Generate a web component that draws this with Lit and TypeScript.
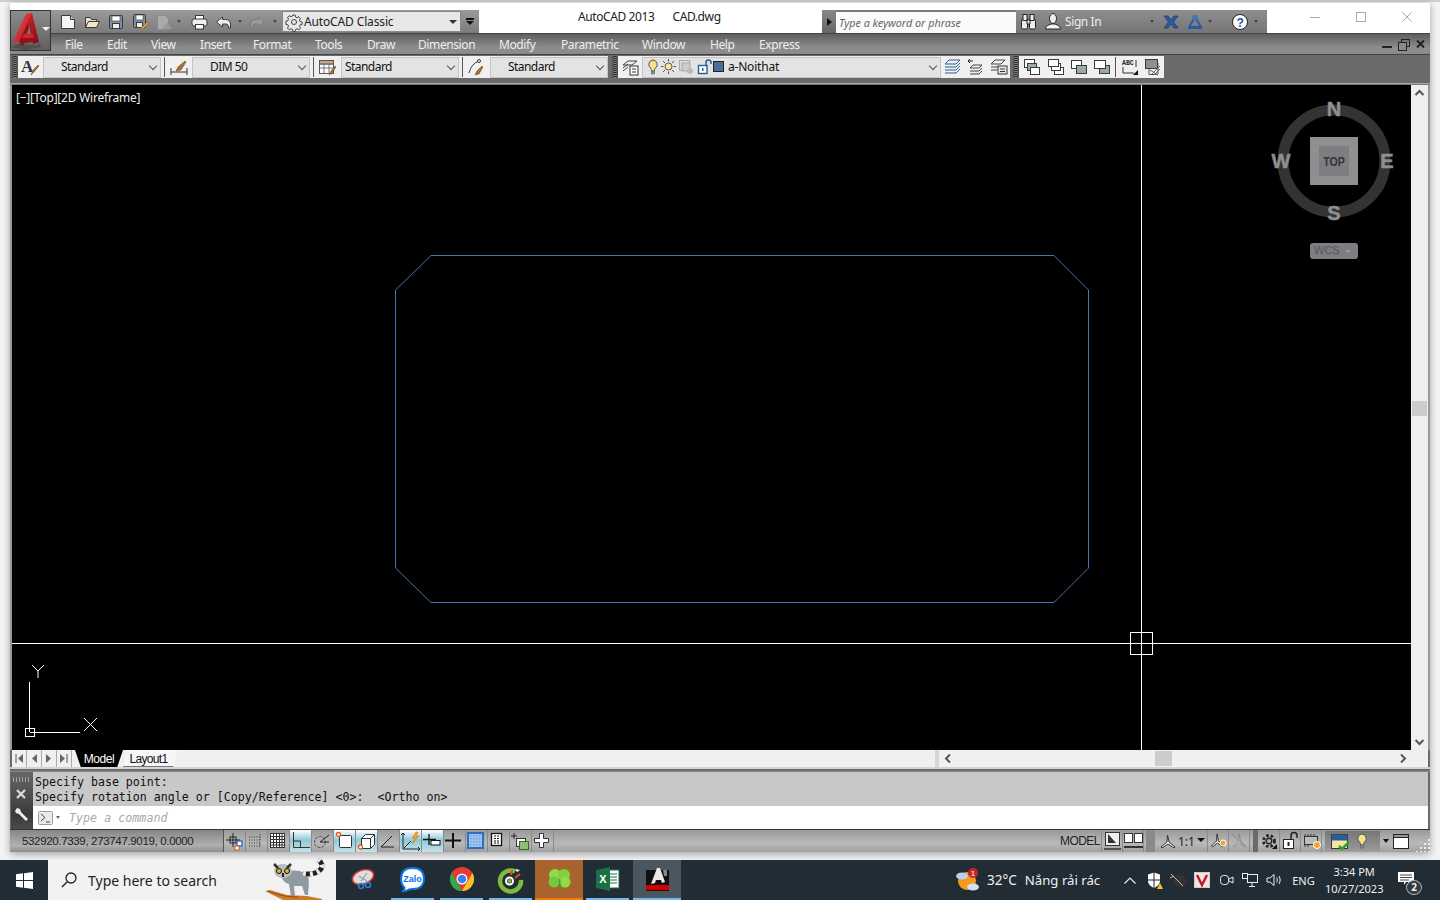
import { LitElement, html, css, svg } from "lit";
import { customElement } from "lit/decorators.js";

const ic = (w: number, h: number, c: unknown, vb?: string) =>
  html`<svg class="ic" width=${w} height=${h} viewBox=${vb ?? `0 0 ${w} ${h}`}>${c}</svg>`;

const S = "#3a3a3a";
const I: Record<string, unknown> = {
  newdoc: svg`<path d="M1.5 1.5h9l4 4v9h-13z" fill="#f4f4f4" stroke="${S}"/><path d="M10.5 1.5v4h4" fill="#ccc" stroke="${S}"/>`,
  open: svg`<path d="M1.5 13.5v-10h5l1 2h5v2" fill="#ddd" stroke="${S}"/><path d="M1.5 13.5l3-6h11l-3 6z" fill="#f0e6c4" stroke="${S}"/>`,
  save: svg`<rect x="1.5" y="1.5" width="13" height="13" rx="1" fill="#7c8ea8" stroke="${S}"/><rect x="4" y="2" width="8" height="5" fill="#fff" stroke="${S}" stroke-width=".6"/><rect x="4.5" y="9.5" width="7" height="5" fill="#eee" stroke="${S}"/>`,
  saveas: svg`<rect x="1.5" y="1.5" width="12" height="13" rx="1" fill="#7c8ea8" stroke="${S}"/><rect x="4" y="2" width="7" height="5" fill="#fff" stroke="${S}" stroke-width=".6"/><rect x="4.5" y="9.5" width="6" height="5" fill="#eee" stroke="${S}"/><path d="M9 15l6-6 1.5 1.5-6 6z" fill="#e8a030" stroke="#8a5a10" stroke-width=".6"/>`,
  preview: svg`<path d="M1.5 1.5h8l3 3v11h-11z" fill="#aaa" stroke="#8a8a8a"/><path d="M6 15l5-7 5 7z" fill="#999"/>`,
  print: svg`<rect x="4.5" y="1.5" width="8" height="4" fill="#fff" stroke="${S}"/><rect x="1" y="5" width="15" height="7" rx="2" fill="#eee" stroke="${S}"/><rect x="4.5" y="10.5" width="8" height="4.5" fill="#fff" stroke="${S}"/>`,
  undo: svg`<path d="M7.5 2L1.5 7l6 5V9h3c2 0 3 1 3 3v1h2V9c0-3-2-4.500-5-4.500H7.500z" fill="#eee" stroke="${S}" stroke-linejoin="round"/>`,
  redo: svg`<path d="M8.500 2l6 5-6 5V9h-3c-2 0-3 1-3 3v1h-2V9c0-3 2-4.500 5-4.500h3z" fill="#9a9a9a" stroke="#7c7c7c" stroke-linejoin="round"/>`,
  gear: svg`<g fill="none" stroke="#444"><circle cx="8" cy="8" r="2.500"/><path d="M6.800 1h2.400l.4 2 1.500.7 1.800-1 1.600 1.700-1 1.700.6 1.500 2 .5v2.300l-2 .5-.6 1.500 1 1.700-1.600 1.700-1.800-1-1.500.6-.4 2H6.800l-.4-2-1.500-.6-1.800 1-1.600-1.700 1-1.700-.6-1.500-2-.5V7.100l2-.5.600-1.500-1-1.700L3.100 1.700l1.800 1 1.500-.7z"/></g>`,
  textstyle: svg`<text x="0" y="14" font-family="Liberation Serif" font-weight="700" font-size="17" fill="#334">A</text><path d="M10 17l2-5 5-5 1 1-5 6z" fill="#a8702c" stroke="#634014" stroke-width=".5"/>`,
  dimstyle: svg`<path d="M1 10v7M17 10v7M1 14h16" stroke="#333" fill="none"/><path d="M6 13l2-4 7-6 1 1-5 8z" fill="#a8702c" stroke="#634014" stroke-width=".5"/>`,
  tablestyle: svg`<rect x=".5" y="1.500" width="14" height="13" fill="#fff" stroke="#555"/><path d="M.5 5h14M.5 9h14M5 5v9.500M10 5v9.500" stroke="#777"/><rect x=".5" y="1.500" width="14" height="3.500" fill="#c8a488" stroke="#555"/><path d="M10 16l2-4 4-5 1 1-4 6z" fill="#a8702c" stroke="#634014" stroke-width=".5"/>`,
  mlstyle: svg`<path d="M1 15c2-7 5-10 10-12" fill="none" stroke="#333"/><circle cx="11" cy="3" r="1.500" fill="#fff" stroke="#333"/><path d="M7 17l2-4 5-5 1 1-4 7z" fill="#a8702c" stroke="#634014" stroke-width=".5"/>`,
  layerprops: svg`<path d="M2 7l5-4h9l-5 4zM2 10l5-4M2 13l5-4" fill="none" stroke="#444"/><rect x="9" y="8" width="8" height="9" fill="#fff" stroke="#333"/><path d="M11 11h4M11 14h4" stroke="#333"/>`,
  bulb: svg`<path d="M6 1a4.500 4.500 0 0 0-2.500 8c1 1 1 2 1 3h3c0-1 0-2 1-3A4.500 4.500 0 0 0 6 1z" fill="#f7e28a" stroke="#555"/><rect x="4.500" y="12" width="3" height="3" fill="#7c8cab" stroke="#555" stroke-width=".5"/>`,
  sun: svg`<circle cx="7.500" cy="7.500" r="3.500" fill="#f4e8a0" stroke="#555"/><path d="M7.500 0v2.500M7.500 12.500V15M0 7.500h2.500M12.500 7.500H15M2 2l2 2M11 11l2 2M13 2l-2 2M4 11l-2 2" stroke="#555"/>`,
  freeze: svg`<rect x=".5" y=".5" width="10" height="10" fill="#ddd" stroke="#aaa"/><rect x="3" y="3" width="8" height="8" fill="#ccc" stroke="#aaa"/><circle cx="11" cy="11" r="3" fill="#bbb"/>`,
  lock: svg`<path d="M9 6V3.500a2.500 2.500 0 0 1 5 0V5" fill="none" stroke="#2a5e9a" stroke-width="1.500"/><rect x="1.500" y="6.500" width="8.500" height="8" fill="#fff" stroke="#2a5e9a" stroke-width="1.400"/><rect x="5" y="9" width="1.500" height="3" fill="#2a5e9a"/>`,
  layers1: svg`<path d="M1 6l4-4h11l-4 4zM1 9h11l4-4M1 12h11l4-4M1 15h11l4-4" fill="none" stroke="#2e5c92"/>`,
  layers2: svg`<path d="M3 10l3-3h9l-3 3zM3 13h9l3-3M3 16h9l3-3" fill="none" stroke="#444"/><path d="M1 3h5M1 3l2-2M1 3l2 2" stroke="#222" fill="none"/>`,
  layers3: svg`<path d="M1 6l4-4h10l-4 4zM1 9h7M1 12h6" fill="none" stroke="#444"/><rect x="8" y="8" width="9" height="8" fill="#e8e8e8" stroke="#333"/><path d="M10 11h5M10 13.500h5" stroke="#333"/>`,
  ord1: svg`<rect x="1.500" y="1.500" width="10" height="8" fill="#fff" stroke="${S}"/><rect x="4.500" y="5.500" width="9" height="7" fill="#9aa" stroke="${S}"/><rect x="7.500" y="9.500" width="9" height="7" fill="#fff" stroke="${S}"/>`,
  ord2: svg`<rect x="7.500" y="9.500" width="9" height="7" fill="#fff" stroke="${S}"/><rect x="4.500" y="5.500" width="9" height="7" fill="#fff" stroke="${S}"/><rect x="1.500" y="1.500" width="10" height="7" fill="#fff" stroke="${S}"/>`,
  ord3: svg`<rect x="1.500" y="2.500" width="10" height="8" fill="#fff" stroke="${S}"/><rect x="6.500" y="7.500" width="10" height="8" fill="#9aa" stroke="${S}"/>`,
  ord4: svg`<rect x="6.500" y="7.500" width="10" height="8" fill="#9aa" stroke="${S}"/><rect x="1.500" y="2.500" width="11" height="8" fill="#fff" stroke="${S}"/>`,
  abc: svg`<text x="1" y="7" font-family="Liberation Mono" font-weight="700" font-size="6.500" fill="#222">ABC</text><path d="M2 9v6h11M15 2v7" fill="none" stroke="#333"/><path d="M12 17l5-5v5z" fill="#111"/>`,
  hatch: svg`<rect x="1.500" y="1.500" width="12" height="9" fill="#8a8f98" stroke="${S}"/><path d="M5 10.500v6h9M14 5v11" fill="none" stroke="#555"/><path d="M8 16l8-8M11 16l5-5M14 17l-8-5" stroke="#666" fill="none"/>`,
  search: svg`<g fill="#eee" stroke="#222"><rect x="1.500" y="6" width="6" height="10" rx="1.500"/><rect x="9.500" y="6" width="6" height="10" rx="1.500"/><rect x="3" y="1.500" width="4" height="6"/><rect x="10" y="1.500" width="4" height="6"/><path d="M7 7h3v4H7z"/></g>`,
  user: svg`<ellipse cx="8" cy="5.500" rx="3.500" ry="5" fill="#eee" stroke="#222"/><path d="M.5 16c0-3 3-4 5.500-5h4c2.500 1 5.500 2 5.500 5z" fill="#f4f4f4" stroke="#222"/>`,
  xicon: svg`<path d="M1 2h4l3 4 3-4h4l-4.500 6L15 14h-4l-3-4-3 4H1l4.500-6z" fill="#2c5aa0" stroke="#112c5c" stroke-width=".6"/>`,
  tri: svg`<path d="M8 3L2 13h12z" fill="none" stroke="#2a5a9e" stroke-width="2" stroke-linejoin="round"/><circle cx="8" cy="3.500" r="2.800" fill="#3e74bf"/><path d="M1 14h14" stroke="#2a5a9e" stroke-width="2"/>`,
  help: svg`<circle cx="8" cy="8" r="7.500" fill="#fff" stroke="#222"/><text x="8" y="12.500" text-anchor="middle" font-family="Liberation Sans" font-weight="700" font-size="12" fill="#1f4fb0">?</text>`,
  snap: svg`<path d="M8 1v14M1 8h14" stroke="#222" fill="none"/><rect x="5" y="5" width="6" height="6" fill="none" stroke="#222"/><rect x="12" y="9" width="5" height="5" fill="#fff" stroke="#2764c4" stroke-width="1.300"/><rect x="10" y="14" width="4" height="4" fill="#fff" stroke="#d8541e"/>`,
  dots: svg`<g stroke="#333" stroke-dasharray="1 1.500"><path d="M2 5h12M2 8h12M2 11h12M2 14h12M13 2v13"/></g>`,
  grid: svg`<rect x="1.500" y="1.500" width="14" height="14" fill="#fff" stroke="#333"/><path d="M4.500 1v15M7.500 1v15M10.500 1v15M13 1v15M1 4.500h15M1 7.500h15M1 10.500h15M1 13h15" stroke="#333"/>`,
  ortho: svg`<path d="M2.500 0v15.500H19M2.500 9h7v6.500" fill="none" stroke="#333"/>`,
  polar: svg`<circle cx="7" cy="10" r="5.500" fill="none" stroke="#555" stroke-dasharray="3 1"/><path d="M7 10L16 3M7 10h9" stroke="#222" fill="none"/>`,
  osnap: svg`<rect x="4.500" y="3.500" width="12" height="12" rx="1" fill="#fff" stroke="#333"/><circle cx="3.500" cy="2.500" r="2" fill="#fff" stroke="#e2571b" stroke-width="1.300"/>`,
  snap3d: svg`<path d="M4.500 6.500l4-4h9v10l-4 4h-9z" fill="#fff" stroke="#333"/><path d="M4.500 6.500h9v10M13.500 6.500l4-4" fill="none" stroke="#333"/><circle cx="3.500" cy="15" r="2" fill="#fff" stroke="#e2571b" stroke-width="1.300"/>`,
  angle: svg`<path d="M2 15h13M2 15L13 4" stroke="#222" fill="none"/>`,
  ducs: svg`<path d="M2 1v16h17" fill="none" stroke="#222"/><path d="M0 3l2-2 2 2M17 15l2 2-2 2" fill="none" stroke="#222"/><path d="M3 16l7-7" stroke="#222"/><path d="M15 0l-4 6h3l-3 6 7-8h-3l2-4z" fill="#f5a623" stroke="#c46e10" stroke-width=".5"/>`,
  dyn: svg`<path d="M6 2v11M0 7.500h13" stroke="#111" stroke-width="1.300"/><rect x="8" y="8.500" width="9" height="4.500" fill="#fff" stroke="#111"/>`,
  lwt: svg`<path d="M8 1v15M0 8.500h16" stroke="#111" stroke-width="2"/>`,
  tpy: svg`<defs><pattern id="chk" width="3" height="3" patternUnits="userSpaceOnUse"><rect width="3" height="3" fill="#9cc4ee"/><rect width="1.500" height="1.500" fill="#6fa2dc"/></pattern></defs><rect x="1" y="1" width="15" height="15" fill="url(#chk)" stroke="#2a6fc0" stroke-width="2"/>`,
  qp: svg`<rect x="2.500" y="1.500" width="10" height="12" fill="#fff" stroke="#111" stroke-width="1.300"/><path d="M5 4h5M5 6.500h5M5 9h5M5 11h5" stroke="#111" stroke-dasharray="2 1"/>`,
  sc: svg`<path d="M0 4h6M3 1v6" stroke="#222"/><rect x="5.500" y="6.500" width="9" height="8" fill="#fff" stroke="#333"/><rect x="8.500" y="9.500" width="9" height="8" fill="#8fbf72" stroke="#2f6e1e"/>`,
  am: svg`<path d="M6.500 1.500h4v5h5v4h-5v5h-4v-5h-5v-4h5z" fill="#fff" stroke="#333"/>`,
  paper: svg`<rect x=".5" y=".5" width="14" height="13" fill="#eee" stroke="#333"/><path d="M3 2v9h8z" fill="#333"/><path d="M-1 17h17" stroke="#333" stroke-width="1.500"/>`,
  qv: svg`<rect x=".5" y=".5" width="8" height="9" fill="#fff" stroke="#333"/><rect x="10.500" y=".5" width="8" height="9" fill="#fff" stroke="#333"/><path d="M0 14h19" stroke="#333" stroke-width="2"/>`,
  anno: svg`<path d="M8.500 1l1.500 7 6 5-1 1-6-4-6 4-1-1 6-5z" fill="#f5f5f5" stroke="#333"/>`,
  annob: svg`<path d="M7 1l1.500 7 5 5-1 1-5-4-5 4-1-1 5-5z" fill="#f5f5f5" stroke="#333"/><circle cx="13" cy="10" r="3" fill="#f6a623" stroke="#fff"/>`,
  annog: svg`<path d="M8 1l1.500 7 5 5-1 1-5-4-5 4-1-1 5-5zM1 1l14 13" fill="#ccc" stroke="#888"/>`,
  wsgear: svg`<circle cx="8" cy="8" r="2.800" fill="none" stroke="#222" stroke-width="1.400"/><circle cx="8" cy="8" r="5.500" fill="none" stroke="#222" stroke-width="2.800" stroke-dasharray="2.500 2"/><path d="M11 16l5-5v5z" fill="#111"/>`,
  tlock: svg`<path d="M9 7V3.500a3 3 0 0 1 6 0V6" fill="none" stroke="#222" stroke-width="1.500"/><rect x="1.500" y="7.500" width="10" height="9" fill="#fff" stroke="#222"/><rect x="5.500" y="10" width="2" height="4" fill="#222"/>`,
  hw: svg`<rect x="2.500" y="3.500" width="13" height="8" fill="#b8bcc4" stroke="#333"/><path d="M3 1v2M6 1v2M9 1v2M12 1v2M3 12v2M6 12v2" stroke="#333"/><circle cx="15" cy="12" r="3.500" fill="#f6a623" stroke="#fff"/>`,
  file: svg`<rect x="1.500" y="1.500" width="16" height="14" fill="#f3e6a5" stroke="#333"/><rect x="1.500" y="1.500" width="16" height="6" fill="#2f5d97"/><path d="M9 13l3 3 7-7" fill="none" stroke="#2f9e2f" stroke-width="2.500"/>`,
  win: svg`<rect x=".5" y=".5" width="15" height="14" fill="#fff" stroke="#222"/><rect x=".5" y=".5" width="15" height="3" fill="#999" stroke="#222"/>`,
  cmd: svg`<rect x=".5" y=".5" width="14" height="13" rx="1" fill="#e9eaee" stroke="#9a9ea8"/><path d="M3 3l4 3.500L3 10M8 11h4" fill="none" stroke="#444"/>`,
};

const MENU: [string, number][] = [["File",42],["Edit",44],["View",49],["Insert",53],["Format",62],["Tools",52],["Draw",51],["Dimension",81],["Modify",62],["Parametric",81],["Window",68],["Help",49],["Express",60]];
const STATUS: [string, boolean][] = [["snap",false],["dots",false],["grid",false],["ortho",true],["polar",false],["osnap",true],["snap3d",true],["angle",false],["ducs",true],["dyn",true],["lwt",false],["tpy",false],["qp",false],["sc",false],["am",false]];

@customElement("app-root")
export class AppRoot extends LitElement {
  static styles = css`
    :host { display: block; width: 1440px; height: 900px; overflow: hidden; font-family: "Noto Sans", sans-serif; background: #f3f3f3; }
    * { box-sizing: border-box; }
    .ic { display: block; flex: none; overflow: visible; }
    .desk { height: 860px; padding: 1px 10px 8px; border-top: 2px solid #cfcfcf; background: #f4f4f4; }
    .win { height: 849px; display: flex; flex-direction: column; background: #6a6a6a; box-shadow: 0 2px 8px rgba(0,0,0,.35); }
    .top { position: relative; height: 52px; flex: none; }
    .titlerow { height: 31px; display: flex; background: #fff; border-bottom: 1px solid #444; }
    .appbtn { position: absolute; left: 0; top: 7px; width: 41px; height: 41px; background: linear-gradient(#8c8c8c,#5f5f5f); border: 1px solid #333; }
    .appbtn .ic { position: absolute; left: 0; top: 0; }
    .qat { width: 469px; margin-top: 7px; padding-left: 50px; display: flex; align-items: center; background: linear-gradient(#9a9a9a,#7c7c7c); }
    .qat > .ic { margin-right: 8px; }
    .drop { display: block; width: 0; height: 0; border: 2.500px solid transparent; border-top: 3px solid #444; border-bottom: 0; flex: none; }
    .qat .d1 { margin: 0 10px 0 -3px; }
    .qat .d2 { margin: 0 8px 0 -1px; }
    .qat .d3 { margin: 0 5px 0 -1px; }
    .ws { width: 179px; height: 21px; display: flex; align-items: center; gap: 2px; padding-left: 3px; background: #e7e7e7; border: 1px solid #888; font-size: 12px; letter-spacing: -.14px; color: #222; position: relative; white-space: nowrap; }
    .ws .caret { position: absolute; right: 3px; top: 8px; width: 0; height: 0; border: 4px solid transparent; border-top: 4px solid #333; border-bottom: 0; }
    .flyout { width: 16px; height: 24px; display: flex; flex-direction: column; align-items: center; justify-content: center; gap: 1px; margin-left: 1px; }
    .flyout i { display: block; width: 8px; height: 1.500px; background: #111; }
    .flyout b { display: block; width: 0; height: 0; border: 4px solid transparent; border-top: 4px solid #111; border-bottom: 0; }
    .title { width: 343px; padding: 6px 0 0 99px; display: flex; gap: 18px; font-size: 12px; letter-spacing: -.4px; line-height: 16px; color: #222; white-space: nowrap; }
    .srch { width: 194px; margin-top: 7px; display: flex; background: #7a7a7a; }
    .srch .tri { width: 14px; display: flex; align-items: center; justify-content: center; background: linear-gradient(#888,#666); }
    .srch .tri i { border: 4px solid transparent; border-left: 5px solid #111; border-right: 0; display: block; }
    .srch .inp { flex: 1; margin: 2px 0 0; background: #fafafa; font-size: 10.800px; font-style: italic; color: #666; padding: 3px 0 0 3px; line-height: 16px; white-space: nowrap; overflow: hidden; }
    .info { width: 251px; margin-top: 7px; display: flex; align-items: center; padding-left: 4px; background: linear-gradient(#8e8e8e,#757575); color: #eee; font-size: 12px; letter-spacing: -.4px; }
    .info .m9 { margin-left: 9px; }
    .info .si { margin-left: 4px; width: 48px; white-space: nowrap; }
    .info .dsign { margin-left: 37px; }
    .info .dtri { margin-left: 5px; }
    .info .m8 { margin-left: 8px; }
    .info .m20 { margin-left: 20px; }
    .info .dhelp { margin-left: 6px; }
    .winctl { flex: 1; display: flex; justify-content: flex-end; gap: 36px; padding: 9px 18px 0 0; }
    .menurow { height: 21px; padding-left: 55px; display: flex; align-items: center; background: linear-gradient(#5e5e5e,#8e8e8e 70%,#8a8a8a); color: #eee; font-size: 12px; letter-spacing: -.4px; white-space: nowrap; position: relative; border-bottom: 1px solid #444; }
    .menurow span { flex: none; }
    .mdi { position: absolute; right: 5px; top: 5px; display: flex; align-items: center; gap: 6px; }
    .toolrow { height: 25px; flex: none; display: flex; padding: 1px 0 2px 2px; background: #6a6a6a; }
    .tb { display: flex; align-items: center; background: #f0f0f0; flex: none; }
    .m4 { margin-left: 4px; }
    .m3 { margin-left: 3px; }
    .grip { width: 6px; align-self: stretch; flex: none; background: repeating-linear-gradient(#222 0 1px,#8a8a8a 1px 2px) center/2px 100% no-repeat #555; }
    .cell { display: flex; align-items: center; justify-content: center; flex: none; width: 23px; }
    .w25 { width: 25px; }
    .w24 { width: 24px; }
    .w27 { width: 27px; }
    .sep { width: 1px; height: 20px; background: #555; flex: none; margin-left: 3px; }
    .sep2 { width: 1px; height: 20px; background: #555; flex: none; margin: 0 2px; }
    .combo { height: 21px; flex: none; display: flex; align-items: center; padding-bottom: 1px; background: #e3e3e3; border: 1px solid #c4c4c4; font-size: 12px; letter-spacing: -.55px; color: #111; position: relative; white-space: nowrap; }
    .combo::after { content: ""; position: absolute; right: 4px; top: 5px; width: 5px; height: 5px; border: solid #555; border-width: 0 1px 1px 0; transform: rotate(45deg); }
    .c118 { width: 118px; padding-left: 17px; }
    .c118.tight { padding-left: 3px; }
    .layer { width: 299px; letter-spacing: -.2px; }
    .layer .b { margin-left: 4px; }
    .layer .s { margin-left: 2px; }
    .layer .f { margin-left: 3px; }
    .layer .l { margin-left: 4px; }
    .layer .sq { width: 11px; height: 11px; background: #4a6d9c; border: 1px solid #222; margin: 0 4px 0 1px; flex: none; }
    .stripe { height: 5px; flex: none; background: linear-gradient(#6a6a6a 0 3px,#aaa 3px 4px,#777 4px); }
    .main { height: 665px; flex: none; display: flex; padding: 0 2px; background: #999; }
    .canvas { width: 1399px; position: relative; background: #000; overflow: hidden; }
    .canvas > svg { display: block; }
    .canvas .compass { position: absolute; left: 1248px; top: 12px; }
    .vplabel { position: absolute; left: 4px; top: 5px; color: #eee; font-size: 12px; letter-spacing: -.22px; line-height: 16px; white-space: nowrap; }
    .vs { width: 17px; flex: none; background: #efefef; position: relative; }
    .vs .thumb { position: absolute; left: 1px; right: 1px; top: 316px; height: 15px; background: #ccc; }
    .vs .ic { position: absolute; left: 4px; }
    .vs .u { top: 5px; } .vs .d { bottom: 5px; }
    .tabs { height: 17px; flex: none; display: flex; margin: 0 2px; background: #f0f0f0; align-items: stretch; position: relative; }
    .nav { width: 60px; display: flex; flex: none; margin-right: 3px; }
    .nav span { width: 15px; display: flex; align-items: center; justify-content: center; border-right: 1px solid #aaa; }
    .tab { font-family: "Liberation Sans", sans-serif; font-size: 12px; letter-spacing: -.4px; line-height: 17px; height: 17px; padding-top: 1px; flex: none; text-align: center; }
    .tab.on { width: 48px; background: #000; color: #fff; clip-path: polygon(0 0,100% 0,88% 100%,12% 100%); }
    .tab.off { width: 55px; padding-right: 4px; color: #111; letter-spacing: -.7px; border-bottom: 1px solid #777; clip-path: polygon(6% 0,100% 0,91% 100%,0 100%); background: #f6f6f6; }
    .hs { margin-left: auto; width: 493px; border-left: 4px solid #d6d6d6; position: relative; }
    .hs .thumb { position: absolute; left: 216px; top: 1px; width: 17px; height: 15px; background: #ccc; }
    .hs .ic { position: absolute; top: 4px; }
    .hs .l { left: 6px; } .hs .r { right: 22px; }
    .septop { height: 5px; flex: none; background: linear-gradient(#d4d4d4 0 2px,#5e5e5e 2px,#8a8a8a); }
    .cmdwrap { height: 57px; flex: none; display: flex; margin: 0 2px 0 1px; background: #c8c8c8; }
    .cmdl { width: 22px; flex: none; display: flex; flex-direction: column; align-items: center; padding: 5px 2px 0 0; background: linear-gradient(#666,#3a3a3a 75%,#4a4a4a); }
    .gripdots { width: 18px; height: 5px; background: radial-gradient(circle,#aaa .8px,transparent 1px) 0 0/3px 2.500px; }
    .cmdl .x { margin-top: 7px; }
    .cmdl .w { margin-top: 8px; }
    .cmdr { flex: 1; display: flex; flex-direction: column; font-family: "DejaVu Sans Mono", monospace; }
    .hist { height: 34px; padding: 3px 0 0 2px; font-size: 11.620px; line-height: 15px; color: #111; white-space: pre; }
    .cmdin { height: 23px; background: #fff; display: flex; align-items: center; padding-left: 5px; }
    .cmdin .drop { margin: 0 9px 0 3px; border-top-color: #666; }
    .cmdin span { font-size: 11.700px; font-style: italic; color: #a8a8a8; }
    .status { height: 23px; flex: none; display: flex; border-top: 1px solid #333; background: linear-gradient(#9a9a9a,#b9b9b9 60%,#a0a0a0); font-size: 11.500px; color: #222; white-space: nowrap; }
    .coords { width: 214px; flex: none; padding-left: 12px; line-height: 22px; font-family: "Liberation Sans", sans-serif; letter-spacing: -.34px; background: linear-gradient(#868686,#b0b0b0 70%,#8e8e8e); border-right: 1px solid #555; }
    .sb { width: 22px; flex: none; display: flex; align-items: center; justify-content: center; border-right: 1px solid #8a8a8a; }
    .sb.n { width: 21px; }
    .sb.on { background: linear-gradient(#fff 0,#8ecad8 45%,#c6e0e8); }
    .grow { flex: 1; }
    .model { width: 43px; padding-left: 1px; line-height: 22px; font-size: 12px; font-family: "Liberation Sans", sans-serif; letter-spacing: -.55px; border-right: 1px solid #8a8a8a; flex: none; }
    .dk { flex: none; background: #6a6a6a; }
    .dk.a { width: 9px; margin-left: 2px; background: #8a8a8a; }
    .dk.b { width: 5px; margin: 0 1px 0 3px; }
    .scale { width: 53px; flex: none; display: flex; align-items: center; gap: 2px; padding-left: 4px; font-size: 12px; border-right: 1px solid #8a8a8a; }
    .scale b { border: 4px solid transparent; border-top: 4px solid #111; border-bottom: 0; display: block; margin-top: -2px; }
    .grp { width: 55px; flex: none; display: flex; align-items: center; gap: 6px; padding-left: 5px; margin: 1px 0 1px 3px; background: linear-gradient(#777,#999); }
    .flick { width: 11px; flex: none; display: flex; align-items: center; justify-content: center; }
    .flick b { border: 3.500px solid transparent; border-top: 4px solid #111; border-bottom: 0; display: block; }
    .wbtn { width: 20px; flex: none; display: flex; align-items: center; justify-content: center; }
    .grip2 { flex: none; width: 19px; background: radial-gradient(circle,#eee 1px,transparent 1.300px) 0 0/4px 4px; clip-path: polygon(100% 30%,100% 100%,20% 100%); }
    .task { height: 40px; display: flex; align-items: stretch; background: #212c34; color: #f0f0f0; position: relative; }
    .start { width: 48px; flex: none; display: flex; align-items: center; justify-content: center; }
    .tsearch { width: 288px; flex: none; background: #f2f2f2; display: flex; align-items: center; gap: 11px; padding-left: 13px; color: #222; font-size: 14px; white-space: nowrap; position: relative; }
    .tsearch .lem { position: absolute; left: 217px; top: 0; }
    .ti { width: 49px; flex: none; display: flex; align-items: center; justify-content: center; border-bottom: 2px solid transparent; }
    .ti.first { margin-left: 3px; }
    .ti.run { border-image: linear-gradient(90deg,transparent 4px,#76b9ed 4px,#76b9ed 45px,transparent 45px) 1; }
    .ti.clover { background: #a9632e; border-bottom-color: #f57c00; width: 48px; }
    .ti.xl { width: 50px; }
    .ti.cur { background: #4c565e; border-bottom-color: #76b9ed; width: 48px; }
    .tray { flex: 1; display: flex; align-items: center; white-space: nowrap; padding-left: 274px; font-size: 13.500px; }
    .tray .wt { margin-left: 7px; }
    .tray .desc { margin-left: 8px; font-size: 13.200px; }
    .tray .up { margin-left: 18px; }
    .tray .ti2 { width: 24px; flex: none; display: flex; align-items: center; justify-content: center; }
    .lang { font-size: 11px; margin-left: 6px; width: 26px; }
    .clock { width: 66px; margin-left: 3px; text-align: center; font-size: 11px; line-height: 17px; }
    .notif { margin-left: 11px; position: relative; width: 24px; height: 24px; padding-top: 4px; }
    .badge { position: absolute; left: 8px; top: 12px; width: 16px; height: 15px; border-radius: 50%; background: #33393e; border: 1px solid #aaa; color: #eee; font-size: 10px; font-weight: 700; line-height: 13px; text-align: center; }
  `;

  private t(name: string, w = 18, h = 18, cls = "cell") {
    return html`<span class=${cls}>${ic(w, h, I[name])}</span>`;
  }

  private compass() {
    return html`<svg class="ic compass" width="136" height="170" viewBox="1260 97 136 170">
      <circle cx="1334" cy="161" r="51" fill="none" stroke="#333" stroke-width="11"/>
      <rect x="1310" y="137" width="48" height="48" fill="#8f8f8f"/>
      <rect x="1319" y="146" width="30" height="30" fill="#7d7d82"/>
      <text x="1334" y="166" text-anchor="middle" font-family="Liberation Sans" font-weight="700" font-size="13" fill="#35353b" transform="translate(1334 0) scale(.82 1) translate(-1334 0)">TOP</text>
      <g font-family="Liberation Sans" font-weight="700" font-size="20" fill="#8f8f8f" stroke="#8f8f8f" stroke-width=".5" text-anchor="middle">
        <text x="1334" y="116">N</text><text x="1334" y="220">S</text><text x="1387" y="168">E</text><text x="1281" y="168">W</text>
      </g>
      <rect x="1310" y="243" width="48" height="16" rx="3" fill="#7d7d86"/>
      <text x="1314" y="254" font-family="Liberation Sans" font-size="11" fill="#555">WCS</text>
      <path d="M1345 250h6l-3 3z" fill="#999"/>
    </svg>`;
  }

  private drawing() {
    return html`<svg width="1399" height="665" viewBox="12 85 1399 665">
      <path d="M431 255.500H1054L1088.500 290V568L1054 602.500H431L395.500 568V290Z" fill="none" stroke="#4a72ad"/>
      <g stroke="#fff" fill="none">
        <path d="M1141.500 85V750M12 643.500H1411"/>
        <rect x="1130.500" y="632.500" width="22" height="22"/>
        <path d="M29.500 682V732M30 732.500H80" />
        <rect x="25.500" y="728.500" width="9" height="8"/>
        <path d="M84 718L97 731M97 718L84 731M32 665L38 671L44 665M38 671V678"/>
      </g>
    </svg>`;
  }

  private logo() {
    return html`<svg class="ic" width="39" height="39" viewBox="0 0 39 39">
      <defs>
        <linearGradient id="rl" x1="0" y1="0" x2="1" y2="1"><stop offset="0" stop-color="#f2434a"/><stop offset="1" stop-color="#b9161d"/></linearGradient>
        <linearGradient id="rs" x1="0" y1="0" x2="0" y2="1"><stop offset="0" stop-color="#d02028"/><stop offset="1" stop-color="#7d1015"/></linearGradient>
      </defs>
      <path d="M0 36l7-3 18 1 4-2 1 4-15 3z" fill="#4a3a3a" opacity=".55"/>
      <path d="M2 31L15 3l6-1 1 4-14 25z" fill="url(#rl)"/>
      <path d="M21 2l7 29-6 2-5-24z" fill="url(#rs)"/>
      <path d="M8 31l9-20 1 6-4 10h7l1 4-8 1-3 3z" fill="#8d1419"/>
      <path d="M13 23h9l1 4H11z" fill="#d92028"/>
      <path d="M31 16h8l-4 4z" fill="#eee"/>
    </svg>`;
  }

  private lemur() {
    return html`<svg class="lem ic" width="62" height="40" viewBox="0 0 62 40">
      <path d="M0 31l5-1 17 5 20 1 15 3v1H18z" fill="#d07a28"/>
      <path d="M3 31c5 2 14 6 30 6" stroke="#8a4c18" fill="none"/>
      <path d="M18 14c5-4 14-5 22-1 5 3 4 10 3 22h-3l-3-9-8 0 1 10h-4l-2-12c-4-1-7-4-8-9z" fill="#8f9aa0"/>
      <path d="M38 13c6 2 14 1 18-4 2-3 1-7-3-9" stroke="#222" stroke-width="5" fill="none"/>
      <path d="M38 13c6 2 14 1 18-4 2-3 1-7-3-9" stroke="#eee" stroke-width="5" fill="none" stroke-dasharray="3 4"/>
      <ellipse cx="18" cy="11" rx="9" ry="7" fill="#b8bec0"/>
      <path d="M9 4l4 4M26 4l-4 4" stroke="#333" stroke-width="2.500"/>
      <circle cx="14" cy="11" r="2.500" fill="#e8b818" stroke="#111"/><circle cx="22" cy="11" r="2.500" fill="#e8b818" stroke="#111"/>
      <path d="M18 13v4" stroke="#222" stroke-width="2"/>
    </svg>`;
  }

  render() {
    return html`
      <div class="desk"><div class="win">
        <div class="top">
          <div class="titlerow">
            <div class="qat">
              ${ic(16, 16, I.newdoc)}${ic(16, 16, I.open)}${ic(16, 16, I.save)}${ic(16, 17, I.saveas)}${ic(16, 16, I.preview)}
              <i class="drop d1"></i>
              ${ic(16, 16, I.print)}${ic(16, 14, I.undo)}<i class="drop d2"></i>${ic(16, 14, I.redo)}<i class="drop d3"></i>
              <div class="ws">${ic(16, 16, I.gear)}<span>AutoCAD Classic</span><i class="caret"></i></div>
              <div class="flyout"><i></i><b></b></div>
            </div>
            <div class="title"><span>AutoCAD 2013</span><span>CAD.dwg</span></div>
            <div class="srch"><span class="tri"><i></i></span><div class="inp">Type a keyword or phrase</div></div>
            <div class="info">
              ${ic(16, 17, I.search)}
              <span class="m9">${ic(16, 17, I.user)}</span>
              <span class="si">Sign In</span>
              <i class="drop dsign"></i>
              <span class="m9">${ic(16, 16, I.xicon)}</span>
              <span class="m8">${ic(16, 16, I.tri)}</span>
              <i class="drop dtri"></i>
              <span class="m20">${ic(16, 16, I.help)}</span>
              <i class="drop dhelp"></i>
            </div>
            <div class="winctl">
              ${ic(10, 10, svg`<path d="M0 5.500h10" stroke="#aaa"/>`)}
              ${ic(10, 10, svg`<rect x=".5" y=".5" width="9" height="9" fill="none" stroke="#aaa"/>`)}
              ${ic(10, 10, svg`<path d="M.5 .5l9 9M9.500 .5l-9 9" stroke="#aaa"/>`)}
            </div>
          </div>
          <div class="menurow">
            ${MENU.map(([m, w]) => html`<span style="width:${w}px">${m}</span>`)}
            <div class="mdi">
              ${ic(10, 12, svg`<path d="M0 8h10" stroke="#222" stroke-width="2"/>`)}
              ${ic(12, 12, svg`<rect x="3.500" y=".5" width="8" height="7" fill="none" stroke="#222"/><rect x=".5" y="3.500" width="8" height="8" fill="#8a8a8a" stroke="#222"/>`)}
              ${ic(9, 12, svg`<path d="M1 1.500l7 7M8 1.500l-7 7" stroke="#222" stroke-width="2"/>`)}
            </div>
          </div>
          <div class="appbtn">${this.logo()}</div>
        </div>
        <div class="toolrow">
          <div class="tb">
            <span class="grip"></span>
            ${this.t("textstyle", 20, 18, "cell w25")}
            <div class="combo c118">Standard</div>
            <span class="sep"></span>
            ${this.t("dimstyle", 18, 18, "cell w27")}
            <div class="combo c118">DIM 50</div>
            <span class="sep"></span>
            ${this.t("tablestyle", 18, 17, "cell w27")}
            <div class="combo c118 tight">Standard</div>
            <span class="sep"></span>
            ${this.t("mlstyle", 18, 18, "cell w27")}
            <div class="combo c118">Standard</div>
          </div>
          <div class="tb m4">
            <span class="grip"></span>
            ${this.t("layerprops", 18, 18, "cell w24")}
            <div class="combo layer">
              <span class="b">${ic(12, 16, I.bulb)}</span><span class="s">${ic(15, 15, I.sun)}</span><span class="f">${ic(14, 14, I.freeze)}</span><span class="l">${ic(15, 15, I.lock)}</span>
              <i class="sq"></i><span>a-Noithat</span>
            </div>
            ${this.t("layers1", 18, 18)}${this.t("layers2", 18, 18)}${this.t("layers3", 18, 18)}
          </div>
          <div class="tb m3">
            <span class="grip"></span>
            ${this.t("ord1", 18, 18, "cell w25")}${this.t("ord2", 18, 18)}${this.t("ord3", 18, 18)}${this.t("ord4", 18, 18)}
            <span class="sep2"></span>
            ${this.t("abc", 18, 18)}${this.t("hatch", 18, 18)}
          </div>
        </div>
        <div class="stripe"></div>
        <div class="main">
          <div class="canvas">
            ${this.drawing()}
            <div class="vplabel">[−][Top][2D Wireframe]</div>
            ${this.compass()}
          </div>
          <div class="vs">
            <div class="thumb"></div>
            <svg class="ic u" width="9" height="6" viewBox="0 0 9 6"><path d="M.5 5l4-4 4 4" fill="none" stroke="#555" stroke-width="2"/></svg>
            <svg class="ic d" width="9" height="6" viewBox="0 0 9 6"><path d="M.5 1l4 4 4-4" fill="none" stroke="#555" stroke-width="2"/></svg>
          </div>
        </div>
        <div class="tabs">
          <div class="nav">
            <span>${ic(8, 9, svg`<path d="M1 0v9" stroke="#555"/><path d="M8 0v9L3 4.500z" fill="#666"/>`)}</span>
            <span>${ic(6, 9, svg`<path d="M6 0v9L1 4.500z" fill="#666"/>`)}</span>
            <span>${ic(6, 9, svg`<path d="M0 0v9l5-4.500z" fill="#666"/>`)}</span>
            <span>${ic(8, 9, svg`<path d="M7 0v9" stroke="#555"/><path d="M0 0v9l5-4.500z" fill="#666"/>`)}</span>
          </div>
          <div class="tab on">Model</div>
          <div class="tab off">Layout1</div>
          <div class="hs">
            <div class="thumb"></div>
            <svg class="ic l" width="6" height="9" viewBox="0 0 6 9"><path d="M5 .5l-4 4 4 4" fill="none" stroke="#555" stroke-width="2"/></svg>
            <svg class="ic r" width="6" height="9" viewBox="0 0 6 9"><path d="M1 .5l4 4-4 4" fill="none" stroke="#555" stroke-width="2"/></svg>
          </div>
        </div>
        <div class="septop"></div>
        <div class="cmdwrap">
          <div class="cmdl">
            <i class="gripdots"></i>
            <svg class="ic x" width="10" height="10" viewBox="0 0 10 10"><path d="M1 1l8 8M9 1l-8 8" stroke="#ddd" stroke-width="2.200"/></svg>
            <svg class="ic w" width="15" height="15" viewBox="0 0 15 15"><path d="M1 4l2-3 3 1 1 3 7 7-2 2-7-7-3-1z" fill="#eee"/></svg>
          </div>
          <div class="cmdr">
            <div class="hist">Specify base point:
Specify rotation angle or [Copy/Reference] &lt;0&gt;:  &lt;Ortho on&gt;</div>
            <div class="cmdin">${ic(15, 14, I.cmd)}<i class="drop"></i><span>Type a command</span></div>
          </div>
        </div>
        <div class="status">
          <div class="coords">532920.7339, 273747.9019, 0.0000</div>
          ${STATUS.map(([n, on]) => html`<span class=${on ? "sb on" : "sb"}>${ic(19, 18, I[n])}</span>`)}
          <div class="grow"></div>
          <div class="model">MODEL</div>
          ${this.t("paper", 15, 18, "sb n")}${this.t("qv", 19, 16, "sb n")}
          <i class="dk a"></i>
          <div class="scale">${ic(17, 15, I.anno)}<span>1:1</span><b></b></div>
          ${this.t("annob", 17, 16, "sb n")}${this.t("annog", 16, 16, "sb n")}
          <i class="dk b"></i>
          ${this.t("wsgear", 16, 16, "sb n")}${this.t("tlock", 16, 18, "sb n")}${this.t("hw", 18, 16, "sb n")}
          <div class="grp">${ic(20, 17, I.file)}${ic(12, 16, I.bulb)}</div>
          <div class="flick"><b></b></div>
          <div class="wbtn">${ic(16, 15, I.win)}</div>
          <div class="grip2"></div>
        </div>
      </div></div>
      <div class="task">
        <div class="start">
          <svg class="ic" width="17" height="17" viewBox="0 0 17 17"><path d="M0 2.300l7-1v6.700H0zM8 1.200L17 0v8H8zM0 9h7v6.700l-7-1zM8 9h9v8l-9-1.200z" fill="#fff"/></svg>
        </div>
        <div class="tsearch">
          <svg class="ic" width="16" height="16" viewBox="0 0 16 16"><circle cx="10" cy="6" r="5" fill="none" stroke="#222" stroke-width="1.300"/><path d="M6 10l-5 5" stroke="#222" stroke-width="1.500"/></svg>
          <span class="ts">Type here to search</span>
          ${this.lemur()}
        </div>
        <span class="ti first">
          <svg class="ic" width="26" height="26" viewBox="0 0 26 26"><ellipse cx="12" cy="11" rx="11" ry="7" transform="rotate(-20 12 11)" fill="#ddd" stroke="#c33" stroke-width="1.500"/><path d="M8 10l8 5M16 7l-6 8" stroke="#888"/><circle cx="10" cy="20" r="2.500" fill="none" stroke="#2a7fd0" stroke-width="1.600"/><circle cx="17" cy="19" r="2.500" fill="none" stroke="#2a7fd0" stroke-width="1.600"/></svg>
        </span>
        <span class="ti run">
          <svg class="ic" width="25" height="25" viewBox="0 0 25 25"><path d="M12.500 1C20 1 24 5 24 11.500S20 22 13 22c-2 0-3 0-4 .5-1.500 1-4 2-6 1.500 1-1 2-2 1.500-3.500C2 18.500 1 15 1 11.500 1 5 5 1 12.500 1z" fill="#fff" stroke="#0a72e8" stroke-width="2"/><text x="12.500" y="15" text-anchor="middle" font-family="Liberation Sans" font-weight="700" font-size="9" fill="#0a72e8">Zalo</text></svg>
        </span>
        <span class="ti run">
          <svg class="ic" width="24" height="24" viewBox="0 0 24 24"><circle cx="12" cy="12" r="12" fill="#e33b2e"/><path d="M12 24A12 12 0 0 1 1.600 6L7 15l5 9z" fill="#2fa84f"/><path d="M12 24l5.500-9.500L22.400 6A12 12 0 0 1 12 24z" fill="#fbc02d"/><circle cx="12" cy="12" r="5.500" fill="#fff"/><circle cx="12" cy="12" r="4.300" fill="#3d7fea"/></svg>
        </span>
        <span class="ti run">
          <svg class="ic" width="25" height="25" viewBox="0 0 25 25"><path d="M17 4.500A10.500 10.500 0 1 0 23 13" fill="none" stroke="#7cbb3c" stroke-width="4.500"/><circle cx="11.500" cy="14" r="3.500" fill="none" stroke="#fff" stroke-width="2"/><circle cx="11.500" cy="14" r="2" fill="#7cbb3c"/><path d="M13 8l1-5M17 11l5-4" stroke="#e84b2c" stroke-width="2"/><path d="M17 2l2 3 3-2z" fill="#fff"/></svg>
        </span>
        <span class="ti clover">
          <svg class="ic" width="25" height="24" viewBox="0 0 25 24"><circle cx="8" cy="8" r="6" fill="#8fdc4a"/><circle cx="17" cy="8" r="6" fill="#7fcf3f"/><circle cx="7" cy="15" r="5.500" fill="#78c83c"/><circle cx="18" cy="15" r="5.500" fill="#8fdc4a"/><path d="M12.500 12l1 11" stroke="#4f9a23" stroke-width="1.500"/></svg>
        </span>
        <span class="ti run xl">
          <svg class="ic" width="24" height="24" viewBox="0 0 24 24"><rect x="11" y="3" width="12" height="18" fill="#fff" stroke="#1d7044"/><path d="M14 7h7M14 10h7M14 13h7M14 16h7" stroke="#1d7044"/><path d="M0 3l14-3v24L0 21z" fill="#1d7044"/><text x="7" y="16" text-anchor="middle" font-family="Liberation Sans" font-weight="700" font-size="11" fill="#fff">X</text></svg>
        </span>
        <span class="ti cur">
          <svg class="ic" width="23" height="24" viewBox="0 0 23 24"><rect y="3" width="23" height="21" fill="#111"/><rect y="18" width="23" height="5" fill="#d60000"/><path d="M5 17L11 1h3l5 14-3 1-1-3H10l-1 3z" fill="#e8e8e8"/><path d="M17 3h4v6h-3z" fill="#888"/></svg>
        </span>
        <div class="tray">
          <svg class="ic" width="25" height="24" viewBox="0 0 25 24"><circle cx="12" cy="13" r="9" fill="#f49a1c"/><ellipse cx="7" cy="8" rx="6" ry="3.500" fill="#b7d2ef"/><ellipse cx="18" cy="19" rx="6" ry="3.500" fill="#cfe2f6"/><circle cx="18" cy="5" r="5" fill="#c4262a"/><text x="18" y="8" text-anchor="middle" font-family="Liberation Sans" font-size="8" fill="#fff">1</text></svg>
          <span class="wt">32°C</span>
          <span class="desc">Nắng rải rác</span>
          <span class="ti2 up">${ic(12, 7, svg`<path d="M.5 6.500l5.500-5.500 5.500 5.500" fill="none" stroke="#eee" stroke-width="1.200"/>`)}</span>
          <span class="ti2">${ic(15, 17, svg`<path d="M1 2.500L7 .5l6 2v6c0 4-3 6-6 7.500-3-1.500-6-3.500-6-7.500z" fill="#fff"/><path d="M7 0v16M1 8h12" stroke="#222" stroke-width="1"/><path d="M10 17l3-6 3 6z" fill="#f5c518"/>`)}</span>
          <span class="ti2">${ic(18, 18, svg`<ellipse cx="11" cy="10" rx="6" ry="7" transform="rotate(-40 11 10)" fill="#333"/><path d="M2 3l12 12M1 7l4-2" stroke="#bbb"/>`)}</span>
          <span class="ti2">${ic(16, 16, svg`<rect x=".5" y=".5" width="15" height="15" fill="#f0e4e0" stroke="#ccc"/><path d="M3 3l5 10 5-10" fill="none" stroke="#b81e2a" stroke-width="2.500"/>`)}</span>
          <span class="ti2">${ic(16, 16, svg`<rect x="2.500" y="3.500" width="8" height="9" rx="3" fill="none" stroke="#eee"/><path d="M11 7l4-2v6l-4-2" fill="none" stroke="#eee"/>`)}</span>
          <span class="ti2">${ic(16, 14, svg`<rect x="5.500" y="1.500" width="10" height="8" fill="none" stroke="#eee"/><rect x=".5" y=".5" width="5" height="5" fill="#212c34" stroke="#eee"/><path d="M10 10v3M7 13.500h6" stroke="#eee"/>`)}</span>
          <span class="ti2">${ic(16, 14, svg`<path d="M1 5h3l4-3.500v11L4 9H1z" fill="none" stroke="#eee"/><path d="M10.500 4.500c1 1.500 1 3.500 0 5M13 3c1.500 2.500 1.500 5.500 0 8" fill="none" stroke="#eee"/>`)}</span>
          <span class="lang">ENG</span>
          <div class="clock">3:34 PM<br />10/27/2023</div>
          <div class="notif">
            ${ic(16, 13, svg`<path d="M0 0h16v10h-8l-2 3v-3H0z" fill="#fff"/><path d="M2 3h12M2 5.500h12M2 8h9" stroke="#444"/>`)}
            <span class="badge">2</span>
          </div>
        </div>
      </div>
    `;
  }
}
